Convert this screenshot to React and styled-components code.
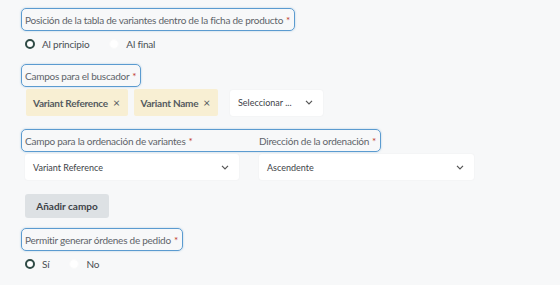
import styled, { createGlobalStyle } from 'styled-components';

const GlobalStyle = createGlobalStyle`
  html, body {
    margin: 0;
    padding: 0;
    background: #f7f8f9;
  }
  body {
    font-family: 'Lato', 'Open Sans', sans-serif;
    color: #555b60;
  }
`;

const Chevron = () => (
  <svg width="8" height="5" viewBox="0 0 8 5" fill="none">
    <path d="M1 0.8l3 3 3-3" stroke="#555" strokeWidth="1.2" />
  </svg>
);

function Radio({ checked, label }) {
  return (
    <RadioItem>
      <RadioDot checked={checked} />
      <span>{label}</span>
    </RadioItem>
  );
}

function App() {
  return (
    <Page>
      <GlobalStyle />
      <Field>
        <LabelBox>
          Posición de la tabla de variantes dentro de la ficha de producto
          <Req>*</Req>
        </LabelBox>
        <RadioRow gap={20}>
          <Radio checked label='Al principio' />
          <Radio label='Al final' />
        </RadioRow>
      </Field>

      <Field>
        <LabelBox>
          Campos para el buscador<Req>*</Req>
        </LabelBox>
        <ChipRow>
          <Chip>
            Variant Reference <ChipX>×</ChipX>
          </Chip>
          <Chip>
            Variant Name <ChipX>×</ChipX>
          </Chip>
          <Select width={93} spaced>
            Seleccionar ...
            <Chevron />
          </Select>
        </ChipRow>
      </Field>

      <Field>
        <LabelBox>
          <PairLabel>
            Campo para la ordenación de variantes<Req>*</Req>
          </PairLabel>
          <span>
            Dirección de la ordenación<Req>*</Req>
          </span>
        </LabelBox>
        <SelectRow>
          <Select width={214}>
            Variant Reference
            <Chevron />
          </Select>
          <Select width={215}>
            Ascendente
            <Chevron />
          </Select>
        </SelectRow>
      </Field>

      <AddButton type='button'>Añadir campo</AddButton>

      <Field>
        <LabelBox>
          Permitir generar órdenes de pedido<Req>*</Req>
        </LabelBox>
        <RadioRow gap={20}>
          <Radio checked label='Sí' />
          <Radio label='No' />
        </RadioRow>
      </Field>
    </Page>
  );
}

export default App;

const Page = styled.div`
  padding: 8px 21px;
  display: flex;
  flex-direction: column;
  align-items: flex-start;
`;

const Field = styled.div`
  display: flex;
  flex-direction: column;
  align-items: flex-start;
  margin-bottom: 13px;
`;

const LabelBox = styled.div`
  display: inline-flex;
  align-items: center;
  height: 23px;
  box-sizing: border-box;
  padding: 0 4px 0 3px;
  border: 1.5px solid #5b9bd0;
  border-radius: 5px;
  box-shadow: 0 0 2px rgba(91, 155, 208, 0.5);
  font-size: 10px;
  letter-spacing: -0.25px;
  color: #5e6469;
`;

const PairLabel = styled.span`
  width: 234px;
`;

const Req = styled.span`
  color: #c0392b;
  margin-left: 3px;
`;

const RadioRow = styled.div`
  display: flex;
  align-items: center;
  gap: ${p => p.gap}px;
  height: 14px;
  margin-top: 6px;
  padding-left: 4px;
  font-size: 10px;
  letter-spacing: -0.2px;
  color: #4a4f54;
`;

const RadioItem = styled.label`
  display: flex;
  align-items: center;
  gap: 7px;
`;

const RadioDot = styled.span`
  width: 10px;
  height: 10px;
  box-sizing: border-box;
  border-radius: 50%;
  background: #fff;
  border: ${p => (p.checked ? '2.5px solid #2e4a45' : '1px solid #fafafa')};
`;

const ChipRow = styled.div`
  display: flex;
  align-items: center;
  gap: 6px;
  margin-top: 2px;
  padding-left: 5px;
`;

const Chip = styled.div`
  display: flex;
  align-items: center;
  height: 27px;
  padding: 0 8px 0 7px;
  background: #f8efd3;
  border-radius: 2px;
  font-size: 10px;
  font-weight: 700;
  letter-spacing: -0.25px;
  color: #555b60;
`;

const ChipX = styled.span`
  margin-left: 5px;
  font-weight: 400;
  font-size: 12px;
`;

const Select = styled.div`
  display: flex;
  align-items: center;
  justify-content: space-between;
  box-sizing: border-box;
  width: ${p => p.width}px;
  height: 26px;
  margin-left: ${p => (p.spaced ? '6px' : '0')};
  padding: 0 10px 0 8px;
  background: #fff;
  border-radius: 3px;
  box-shadow: 0 0 2px rgba(0, 0, 0, 0.06);
  font-size: 9px;
  color: #3e4348;
`;

const SelectRow = styled.div`
  display: flex;
  gap: 20px;
  margin-top: 2px;
  padding-left: 4px;
`;

const AddButton = styled.button`
  margin: 1px 0 10px 4px;
  width: 84px;
  height: 24px;
  border: none;
  border-radius: 3px;
  background: #dde1e4;
  font-family: 'Lato', sans-serif;
  font-size: 10px;
  font-weight: 700;
  color: #3e4348;
`;
